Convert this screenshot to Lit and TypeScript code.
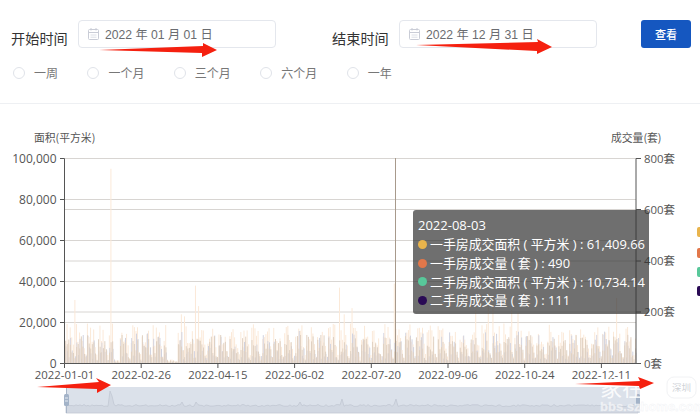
import { LitElement, html, css, svg } from "lit";
import { customElement } from "lit/decorators.js";

const X0 = 64.5, X1 = 636, Y0 = 363.5, YT = 158.5;
const yL = (v: number) => Y0 - (v / 100000) * (Y0 - YT);

function rng(seed: number) {
  let s = seed;
  return () => {
    s = (s * 1664525 + 1013904223) % 4294967296;
    return s / 4294967296;
  };
}

type Bar = { x: number; y: number; c: string };
function makeBars(): Bar[] {
  const r = rng(2022);
  const out: Bar[] = [];
  const n = 365;
  const step = (X1 - X0) / n;
  const spikes: Record<number, number> = {
    29: 95000, 6: 31000, 74: 24000, 76: 23000, 83: 38000, 85: 28000, 175: 37000, 178: 24000,
    183: 27000, 210: 39000, 262: 26000, 270: 34000, 273: 29000, 285: 26000, 289: 25000, 352: 32000,
  };
  for (let i = 0; i < n; i++) {
    const x = X0 + 1 + i * step;
    const wk = i % 7;
    let m = wk === 5 ? 0.5 : wk === 6 ? 0.25 : 1;
    if ((i > 30 && i < 35) || (i > 64 && i < 72)) m = 0.12;
    const a = (8500 + r() * 11000) * m;
    const b = (5000 + r() * 9000) * m;
    const c = (5000 + r() * 11000) * m * (r() > 0.5 ? 1 : 0.4);
    const top = spikes[i] ?? a;
    out.push({ x, y: yL(top), c: "#fbe9d8" });
    out.push({ x: x + 0.5, y: yL(c), c: "#d0d2df" });
    out.push({ x: x + 0.2, y: yL(b), c: "#e0d1c2" });
  }
  return out;
}

function spark(): string {
  const r = rng(77);
  const pts: string[] = [];
  const spikes: Record<number, number> = { 110: 391, 112: 396, 342: 399, 396: 399, 300: 402, 182: 402, 196: 402 };
  for (let x = 66; x <= 638; x += 2) {
    const y = spikes[x] ?? 404.5 + r() * 2;
    pts.push(`${x},${y.toFixed(1)}`);
  }
  return pts.join(" ");
}

const BARS = makeBars();
const SPARK = spark();
const LEFT = [
  ["100,000", 158.5], ["80,000", 199.5], ["60,000", 240.5], ["40,000", 281.5], ["20,000", 322.5], ["0", 363.5],
] as const;
const RIGHT = [
  ["800套", 158.5], ["600套", 209.5], ["400套", 261], ["200套", 312], ["0套", 363.5],
] as const;
const DATES = ["2022-01-01", "2022-02-26", "2022-04-15", "2022-06-02", "2022-07-20", "2022-09-06", "2022-10-24", "2022-12-11"];
const LEGEND = [["#e9b44c", 232], ["#e2774a", 253], ["#58c89a", 272], ["#2a0a55", 291]] as const;
const TIP = [
  ["#e9b44c", "一手房成交面积 ( 平方米 ) : 61,409.66"],
  ["#e2774a", "一手房成交量 ( 套 ) : 490"],
  ["#58c89a", "二手房成交面积 ( 平方米 ) : 10,734.14"],
  ["#2a0a55", "二手房成交量 ( 套 ) : 111"],
];
const ARROWS = [
  "99,50 203,46 203,43 217,50 202,57 202,53",
  "416,45 538,42 537,39 552,47 537,54 537,51",
  "37,387 99,382 96,378 111,385 97,393 97,389",
  "575,384 640,381 638,377 654,383 640,389 639,386",
];

@customElement("app-root")
export class AppRoot extends LitElement {
  static styles = css`
    :host {
      display: block;
      position: relative;
      width: 700px;
      height: 415px;
      overflow: hidden;
      background: #fff;
      font-family: "Open Sans", "Noto Sans CJK SC", sans-serif;
      color: #333;
    }
    .filters {
      box-sizing: border-box;
      height: 104px;
      padding: 20px 9px 0 11px;
      border-bottom: 1px solid #eef0f3;
    }
    .row { display: flex; align-items: flex-end; }
    .label {
      font-family: "Noto Sans CJK SC", sans-serif;
      font-size: 14.2px;
      line-height: 20px;
      width: 57px;
      color: #333;
      white-space: nowrap;
    }
    .date {
      box-sizing: border-box;
      width: 198px;
      height: 28px;
      margin-left: 10px;
      padding-left: 9px;
      display: flex;
      align-items: center;
      gap: 6px;
      border: 1px solid #e4e7ed;
      border-radius: 4px;
      font-family: "Liberation Sans", "Noto Sans CJK SC", sans-serif;
      font-size: 12.2px;
      color: #6a6c70;
    }
    .date svg { flex: none; }
    .end { margin-left: 56px; }
    .btn {
      box-sizing: border-box;
      margin-left: auto;
      width: 50px;
      height: 28px;
      border: none;
      border-radius: 3px;
      background: #1557c0;
      color: #fff;
      font-family: "Noto Sans CJK SC", sans-serif;
      font-size: 11px;
      font-weight: 500;
      padding: 0;
    }
    .radios {
      display: flex;
      gap: 29.4px;
      margin: 17px 0 0 2px;
    }
    .radio {
      display: flex;
      align-items: center;
      gap: 9px;
      font-family: "Noto Sans CJK SC", sans-serif;
      font-size: 12px;
      line-height: 16px;
      color: #777;
    }
    .dot {
      box-sizing: border-box;
      width: 12px;
      height: 12px;
      border: 1px solid #e0e3e9;
      border-radius: 50%;
    }
    .chart { display: block; }
    .t { font-family: "Open Sans", "Noto Sans CJK SC", sans-serif; font-size: 11.4px; fill: #555; }
    .t.big { font-size: 12px; }
    .cap { font-family: "Noto Sans CJK SC", sans-serif; font-size: 10.8px; fill: #555; }
    .tip {
      position: absolute;
      left: 413px;
      top: 210px;
      box-sizing: border-box;
      width: 236px;
      height: 104px;
      padding: 5px 3px 0 5px;
      border-radius: 3px;
      background: rgba(50, 50, 50, 0.7);
      color: #fff;
      font-family: "Open Sans", "Noto Sans CJK SC", sans-serif;
      font-size: 12.9px;
      line-height: 18.8px;
      white-space: nowrap;
    }
    .tip-title { font-size: 13px; line-height: 20px; }
    .tip-row { display: flex; align-items: center; gap: 3px; }
    .tip-dot { flex: none; width: 9px; height: 9px; border-radius: 50%; }
    .overlay { position: absolute; inset: 0; pointer-events: none; }
    .wm { font-family: "Noto Sans CJK SC", sans-serif; font-size: 22px; fill: #fff; fill-opacity: 0.85; }
    .wm-url {
      font-family: "Liberation Sans", sans-serif;
      font-size: 13px;
      font-weight: 700;
      fill: #fff;
      fill-opacity: 0.65;
      stroke: #eceef2;
      stroke-width: 0.4;
      stroke-opacity: 0.8;
    }
    .wm-city { font-family: "Noto Sans CJK SC", sans-serif; font-size: 9.5px; fill: #cfd2d7; }
  `;

  private calendar() {
    return html`<svg width="11" height="12" viewBox="0 0 11 12" fill="none" stroke="#c9ccd6" stroke-width="1">
      <rect x="0.5" y="1.5" width="10" height="10" rx="1"></rect>
      <path d="M0.5 4.5h10M3 0v2.5M8 0v2.5"></path>
      <path d="M2.5 7h6M2.5 9.2h6" stroke="#dcdfe6"></path>
    </svg>`;
  }

  render() {
    return html`
      <section class="filters">
        <div class="row">
          <span class="label">开始时间</span>
          <div class="date">${this.calendar()}<span>2022 年 01 月 01 日</span></div>
          <span class="label end">结束时间</span>
          <div class="date">${this.calendar()}<span>2022 年 12 月 31 日</span></div>
          <button class="btn">查看</button>
        </div>
        <div class="radios">
          ${["一周", "一个月", "三个月", "六个月", "一年"].map(
            (l) => html`<div class="radio"><span class="dot"></span><span>${l}</span></div>`
          )}
        </div>
      </section>
      <svg class="chart" width="700" height="311" viewBox="0 104 700 311">
        <text class="cap" x="34" y="142">面积(平方米)</text>
        <text class="cap" x="611" y="142">成交量(套)</text>
        ${[158.5, 199.5, 209.5, 240.5, 261, 281.5, 312, 322.5].map(
          (y) => svg`<line x1=${X0} x2=${X1} y1=${y} y2=${y} stroke="#d8d5d2"></line>`
        )}
        ${BARS.map((b) => svg`<line x1=${b.x} x2=${b.x} y1=${b.y} y2=${Y0} stroke=${b.c} stroke-width="1"></line>`)}
        <line x1="395.5" x2="395.5" y1="158" y2="363" stroke="#a89a8c"></line>
        <line x1=${X0} x2=${X0} y1=${YT} y2=${Y0} stroke="#555"></line>
        <line x1=${X1} x2=${X1} y1=${YT} y2=${Y0} stroke="#555"></line>
        <line x1=${X0} x2=${X1} y1=${Y0} y2=${Y0} stroke="#555"></line>
        ${LEFT.map(
          ([t, y]) => svg`<line x1="60" x2=${X0} y1=${y} y2=${y} stroke="#555"></line>
            <text class="t big" x="56.5" y=${y + 4} text-anchor="end">${t}</text>`
        )}
        ${RIGHT.map(
          ([t, y]) => svg`<line x1=${X1} x2="641" y1=${y} y2=${y} stroke="#555"></line>
            <text class="t" x="644" y=${y + 4}>${t}</text>`
        )}
        ${DATES.map((d, i) => {
          const x = 64.5 + i * 76.7;
          return svg`<line x1=${x} x2=${x} y1=${Y0} y2="368" stroke="#555"></line>
            <text class="t" x=${x} y="379" text-anchor="middle">${d}</text>`;
        })}
        <rect x="66" y="387" width="574" height="26" fill="#dbe1ea"></rect>
        <polygon points="66,413 ${SPARK} 638,413" fill="#d2d8e2" stroke="#c2c8d3" stroke-width="0.8"></polygon>
        <line x1="66.5" x2="66.5" y1="387" y2="413" stroke="#a9b6c8"></line>
        <rect x="64" y="394" width="5" height="12" rx="1.5" fill="#a3b3c8"></rect>
        <path d="M65 398h3M65 401h3" stroke="#e6ebf2"></path>
        <rect x="636" y="394" width="4" height="12" rx="1.5" fill="#a3b3c8"></rect>
        ${LEGEND.map(([c, y]) => svg`<rect x="697" y=${y - 5} width="6" height="10" rx="2" fill=${c}></rect>`)}
      </svg>
      <div class="tip">
        <div class="tip-title">2022-08-03</div>
        ${TIP.map(
          ([c, t]) => html`<div class="tip-row"><span class="tip-dot" style="background:${c}"></span><span>${t}</span></div>`
        )}
      </div>
      <svg class="overlay" width="700" height="415" viewBox="0 0 700 415">
        <text class="wm" x="600" y="396">家在</text>
        <rect x="667" y="377" width="29" height="21" rx="7" fill="#fff" fill-opacity="0.6" stroke="#f1f2f4"></rect>
        <text class="wm-city" x="672" y="391">深圳</text>
        <text class="wm-url" x="600" y="411">bbs.szhome.com</text>
        ${ARROWS.map((p) => svg`<polygon points=${p} fill="#f5200f"></polygon>`)}
      </svg>
    `;
  }
}
